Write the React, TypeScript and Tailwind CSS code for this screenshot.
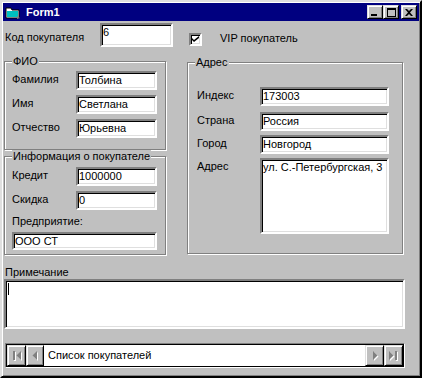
import React from "react";

const FONT = "font-['Liberation_Sans',Arial,sans-serif] text-[11px] leading-[13px] text-black";

const SUNKEN =
  "bg-white border-2 border-t-[#808080] border-l-[#808080] border-r-white border-b-white shadow-[inset_1px_1px_0_#000,inset_-1px_-1px_0_#dfdfdf]";

const RAISED =
  "bg-[#c0c0c0] border border-t-[#dfdfdf] border-l-[#dfdfdf] border-r-black border-b-black shadow-[inset_1px_1px_0_#fff,inset_-1px_-1px_0_#808080]";

function TextBox({ value, className, multiline }: { value: string; className: string; multiline?: boolean }) {
  return (
    <div className={`${SUNKEN} ${className} box-border overflow-hidden pl-[1px] ${multiline ? "pt-[1px]" : "pt-[1px]"}`}>
      {value}
    </div>
  );
}

function GroupBox({ title, className, children }: { title: string; className: string; children: React.ReactNode }) {
  return (
    <div
      className={`relative box-border border border-[#808080] shadow-[inset_1px_1px_0_#fff,1px_1px_0_#fff] ${className}`}
    >
      <span className="absolute left-[7px] top-[-7px] bg-[#c0c0c0] px-[1px]">{title}</span>
      {children}
    </div>
  );
}

function Row({ label, labelWidth, children, className }: { label: string; labelWidth: string; children: React.ReactNode; className?: string }) {
  return (
    <div className={`flex items-start ${className ?? ""}`}>
      <div className={`${labelWidth} mt-[2px] shrink-0`}>{label}</div>
      {children}
    </div>
  );
}

function TitleIcon() {
  return (
    <svg width="16" height="14" viewBox="0 0 16 14">
      <path d="M1 2h5l1 2h7v8H1z" fill="#fff" stroke="#000" strokeWidth="1" />
      <rect x="2" y="5" width="11" height="6" fill="#00c0c0" />
      <path d="M12 10l3 2-3 1z" fill="#808080" />
    </svg>
  );
}

function DisabledArrow({ kind }: { kind: "first" | "prev" | "next" | "last" }) {
  const gray = "#808080";
  return (
    <svg width="14" height="14" viewBox="0 0 14 14">
      {kind === "first" && (
        <>
          <rect x="4" y="3" width="2" height="9" fill="#fff" />
          <path d="M12 3v9L7.5 7.5z" fill="#fff" />
          <rect x="3" y="2" width="2" height="9" fill={gray} />
          <path d="M11 2v9L6.5 6.5z" fill={gray} />
        </>
      )}
      {kind === "prev" && (
        <>
          <path d="M10 3v9L5.5 7.5z" fill="#fff" />
          <path d="M9 2v9L4.5 6.5z" fill={gray} />
        </>
      )}
      {kind === "next" && (
        <>
          <path d="M6 3v9l4.5-4.5z" fill="#fff" />
          <path d="M5 2v9l4.5-4.5z" fill={gray} />
        </>
      )}
      {kind === "last" && (
        <>
          <path d="M3 3v9l4.5-4.5z" fill="#fff" />
          <rect x="9" y="3" width="2" height="9" fill="#fff" />
          <path d="M2 2v9l4.5-4.5z" fill={gray} />
          <rect x="8" y="2" width="2" height="9" fill={gray} />
        </>
      )}
    </svg>
  );
}

export default function App() {
  return (
    <div className={`${FONT} w-[422px] h-[378px] box-border bg-[#c0c0c0] border-2 border-t-[#dfdfdf] border-l-[#dfdfdf] border-r-black border-b-black shadow-[inset_1px_1px_0_#fff,inset_-1px_-1px_0_#808080] p-[1px] flex flex-col`}>
      {/* title bar */}
      <div className="h-[18px] bg-[#000080] flex items-center shrink-0">
        <div className="ml-[2px] mt-[1px] flex items-center">
          <TitleIcon />
        </div>
        <span className="ml-[5px] text-white font-bold">Form1</span>
        <div className="ml-auto flex items-center">
          <div className={`${RAISED} w-[16px] h-[14px] flex items-end justify-start`}>
            <div className="ml-[3px] mb-[2px] w-[6px] h-[2px] bg-black" />
          </div>
          <div className={`${RAISED} w-[16px] h-[14px] flex items-center justify-center`}>
            <div className="w-[9px] h-[9px] border border-black border-t-2 box-border" />
          </div>
          <div className={`${RAISED} ml-[2px] mr-[2px] w-[16px] h-[14px] flex items-center justify-center`}>
            <svg width="8" height="7" viewBox="0 0 8 7">
              <path d="M0 0h2l2 2 2-2h2L5 3.5 8 7H6L4 5 2 7H0l3-3.5z" fill="#000" />
            </svg>
          </div>
        </div>
      </div>

      {/* first row */}
      <div className="mt-[2px] flex items-start h-[24px]">
        <div className="ml-[2px] w-[95px] mt-[8px]">Код покупателя</div>
        <TextBox value="6" className="w-[73px] h-[24px]" />
        <div className={`${SUNKEN} ml-[16px] mt-[10px] w-[13px] h-[13px] box-border flex items-center justify-center`}>
          <svg width="7" height="7" viewBox="0 0 7 7">
            <path d="M0 2l2 2 5-4v2L2 6 0 4z" fill="#000" />
          </svg>
        </div>
        <div className="ml-[18px] mt-[9px]">VIP покупатель</div>
      </div>

      {/* frames */}
      <div className="mt-[14px] flex items-start">
        <div className="ml-[1px] w-[162px] flex flex-col">
          <GroupBox title="ФИО" className="h-[89px] pt-[9px] pl-[7px] flex flex-col gap-[5px]">
            <Row label="Фамилия" labelWidth="w-[64px]">
              <TextBox value="Толбина" className="w-[81px] h-[19px]" />
            </Row>
            <Row label="Имя" labelWidth="w-[64px]">
              <TextBox value="Светлана" className="w-[81px] h-[19px]" />
            </Row>
            <Row label="Отчество" labelWidth="w-[64px]">
              <TextBox value="Юрьевна" className="w-[81px] h-[19px]" />
            </Row>
          </GroupBox>
          <GroupBox title="Информация о покупателе" className="mt-[6px] h-[99px] pt-[10px] pl-[7px] flex flex-col">
            <Row label="Кредит" labelWidth="w-[64px]">
              <TextBox value="1000000" className="w-[81px] h-[19px]" />
            </Row>
            <Row label="Скидка" labelWidth="w-[64px]" className="mt-[5px]">
              <TextBox value="0" className="w-[81px] h-[19px]" />
            </Row>
            <div className="mt-[5px]">Предприятие:</div>
            <TextBox value="ООО СТ" className="mt-[4px] w-[145px] h-[18px]" />
          </GroupBox>
        </div>

        <GroupBox title="Адрес" className="ml-[21px] mt-[1px] w-[216px] h-[192px] pt-[24px] pl-[9px] flex flex-col">
          <Row label="Индекс" labelWidth="w-[63px]">
            <TextBox value="173003" className="w-[129px] h-[19px]" />
          </Row>
          <Row label="Страна" labelWidth="w-[63px]" className="mt-[6px]">
            <TextBox value="Россия" className="w-[129px] h-[19px]" />
          </Row>
          <Row label="Город" labelWidth="w-[63px]" className="mt-[4px]">
            <TextBox value="Новгород" className="w-[129px] h-[19px]" />
          </Row>
          <Row label="Адрес" labelWidth="w-[63px]" className="mt-[4px]">
            <TextBox value="ул. С.-Петербургская, 3" className="w-[129px] h-[76px]" multiline />
          </Row>
        </GroupBox>
      </div>

      {/* note */}
      <div className="ml-[2px] mt-[11px]">Примечание</div>
      <div className={`${SUNKEN} ml-[1px] w-[401px] h-[50px] box-border pl-[2px] pt-[2px]`}>
        <div className="w-[1px] h-[12px] bg-black" />
      </div>

      {/* data control */}
      <div className="ml-[2px] mt-[14px] w-[400px] h-[25px] box-border border border-t-[#808080] border-l-[#808080] border-r-white border-b-white flex">
        <div className="flex-1 flex border border-black bg-white">
          <div className={`${RAISED} w-[19px] h-full box-border flex items-center justify-center border-r-black`}>
            <DisabledArrow kind="first" />
          </div>
          <div className={`${RAISED} w-[18px] h-full box-border flex items-center justify-center`}>
            <DisabledArrow kind="prev" />
          </div>
          <div className="flex-1 flex items-center pl-[4px]">Список покупателей</div>
          <div className={`${RAISED} w-[19px] h-full box-border flex items-center justify-center`}>
            <DisabledArrow kind="next" />
          </div>
          <div className={`${RAISED} w-[19px] h-full box-border flex items-center justify-center`}>
            <DisabledArrow kind="last" />
          </div>
        </div>
      </div>
    </div>
  );
}
